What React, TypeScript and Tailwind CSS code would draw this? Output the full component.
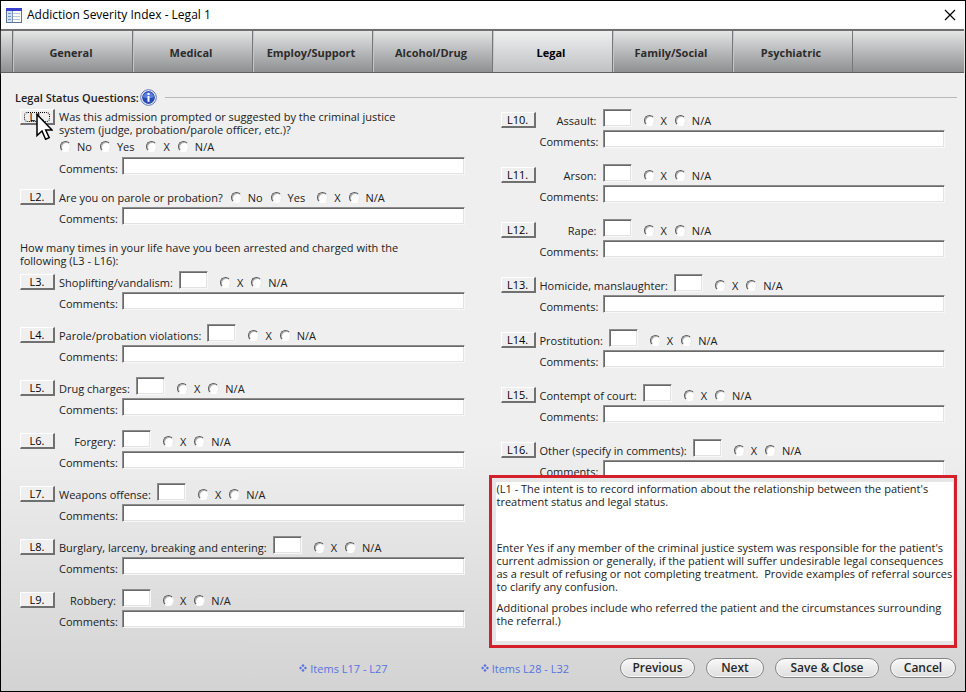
import type { ReactNode } from "react"
import { clsx } from "clsx"

/* ── Form data ───────────────────────────────────────────────────── */
const tabs = ["General", "Medical", "Employ/Support", "Alcohol/Drug", "Legal", "Family/Social", "Psychiatric"]
const activeTab = "Legal"

type Charge = { id: string; label: string }

const leftCharges: Charge[] = [
  { id: "L3", label: "Shoplifting/vandalism:" },
  { id: "L4", label: "Parole/probation violations:" },
  { id: "L5", label: "Drug charges:" },
  { id: "L6", label: "Forgery:" },
  { id: "L7", label: "Weapons offense:" },
  { id: "L8", label: "Burglary, larceny, breaking and entering:" },
  { id: "L9", label: "Robbery:" },
]

const rightCharges: Charge[] = [
  { id: "L10", label: "Assault:" },
  { id: "L11", label: "Arson:" },
  { id: "L12", label: "Rape:" },
  { id: "L13", label: "Homicide, manslaughter:" },
  { id: "L14", label: "Prostitution:" },
  { id: "L15", label: "Contempt of court:" },
  { id: "L16", label: "Other (specify in comments):" },
]

const sunken =
  "border border-t-[#8c8c8c] border-l-[#8c8c8c] border-r-[#f8f8f8] border-b-[#f8f8f8] bg-white shadow-[inset_1px_1px_0_#696969,inset_-1px_-1px_0_#e3e3e3] outline-none"

/* ── Small controls ──────────────────────────────────────────────── */
function ItemButton({ id, focused = false }: { id: string; focused?: boolean }) {
  return (
    <button
      type="button"
      className="h-4 w-[35px] shrink-0 border-t border-l border-r-2 border-b-2 border-t-white border-l-white border-r-[#707070] border-b-[#707070] bg-[#efefef] text-[11px] leading-[13px] text-black"
    >
      <span className={clsx("block", focused && "mx-[3px] h-[10px] rounded-sm border border-dotted border-black leading-[8px]")}>
        {id}.
      </span>
    </button>
  )
}

function Radios({ name, options }: { name: string; options: string[] }) {
  return (
    <div className="flex items-center">
      {options.map((option, i) => (
        <label key={option} className={clsx("flex items-center gap-[6px]", i > 0 && (option === "X" ? "ml-3" : "ml-2"))}>
          <input
            type="radio"
            name={name}
            className="size-[11px] appearance-none rounded-full border border-t-[#5a5a5a] border-r-[#e8e8e8] border-b-white border-l-[#5a5a5a] bg-white shadow-[inset_1px_1px_0_#b4b4b4]"
          />
          {option}
        </label>
      ))}
    </div>
  )
}

function Comments({ id }: { id: string }) {
  return (
    <div className="flex h-[18px] items-end pl-[39px]">
      <label htmlFor={`${id}-comments`} className="w-[57px] shrink-0">
        Comments:
      </label>
      <input id={`${id}-comments`} className={clsx(sunken, "ml-[6px] h-[18px] min-w-0 flex-1")} />
    </div>
  )
}

function ChargeRow({ id, label, className }: Charge & { className: string }) {
  return (
    <div className={className}>
      <div className="flex h-[19px] items-end">
        <ItemButton id={id} />
        <label htmlFor={`${id}-count`} className="ml-1 min-w-[57px] pb-px text-right whitespace-nowrap">
          {label}
        </label>
        <input id={`${id}-count`} className={clsx(sunken, "mr-3 ml-[6px] h-[18px] w-[29px] self-start")} />
        <div className="pb-px">
          <Radios name={id} options={["X", "N/A"]} />
        </div>
      </div>
      <div className="mt-[2px]">
        <Comments id={id} />
      </div>
    </div>
  )
}

function FooterButton({ children, className }: { children: ReactNode; className: string }) {
  return (
    <button
      type="button"
      className={clsx(
        "h-5 rounded-full border border-[#858585] bg-gradient-to-b from-[#f8f8f8] to-[#dedede] text-[12px] leading-4 font-semibold text-[#262626] shadow-[inset_0_0_0_1px_#fafafa]",
        className
      )}
    >
      {children}
    </button>
  )
}

/* ── Drawings ────────────────────────────────────────────────────── */
function FormIcon() {
  return (
    <svg width="16" height="15" viewBox="0 0 16 15" aria-hidden="true">
      <rect x="0.5" y="0.5" width="15" height="14" fill="#fff" stroke="#5f7592" />
      <rect x="0" y="0" width="16" height="3" fill="#3a3fd0" />
      <rect x="1" y="3" width="5" height="11" fill="#d3e1f5" />
      <path d="M2 5.5h3M2 8.5h3M2 11.5h3" stroke="#6f93c4" />
      <path d="M7 5.5h7M7 8.5h7M7 11.5h7" stroke="#b4c6dc" />
      <path d="M6.5 3v11" stroke="#7f93ad" />
    </svg>
  )
}

function InfoIcon() {
  return (
    <svg className="ml-px" width="17" height="17" viewBox="0 0 17 17" aria-hidden="true">
      <circle cx="8.5" cy="8.5" r="7.8" fill="#fff" stroke="#5b6eb0" />
      <circle cx="8.5" cy="8.5" r="6.4" fill="#2a4db5" />
      <path d="M3 8a5.6 5.6 0 0 1 11 0c-3 1.6-8 1.6-11 0z" fill="#5c7fdb" />
      <circle cx="8.5" cy="4.9" r="1.2" fill="#fff" />
      <path d="M7.5 7h2v5.800h-2z" fill="#fff" />
    </svg>
  )
}

function Cursor() {
  return (
    <svg className="absolute top-[7px] left-4" width="17" height="28" viewBox="0 0 17 28" aria-hidden="true">
      <path d="M1 1.5v21l5-4.5 3.6 8.3 3.6-1.6L9.7 17H16z" fill="#fff" stroke="#000" strokeWidth="1.5" />
    </svg>
  )
}

function ItemsLink({ children }: { children: ReactNode }) {
  return (
    <a href="#" className="flex items-center gap-[3px] text-[#5673e0]">
      <svg width="8" height="8" viewBox="0 0 10 10" fill="currentColor" aria-hidden="true">
        <path d="M5 0l2 2-2 2-2-2zM5 6l2 2-2 2-2-2zM2 3l2 2-2 2-2-2zM8 3l2 2-2 2-2-2z" />
      </svg>
      {children}
    </a>
  )
}

/* ── Page ────────────────────────────────────────────────────────── */
export default function App() {
  return (
    <div className="flex min-h-screen flex-col border border-black bg-[#efefef] font-['Open_Sans','Noto_Sans',sans-serif] text-[11px] leading-[13px] text-[#222]">
      {/* Title bar */}
      <header className="flex h-7 items-center bg-white pr-[9px] pl-[5px] text-black">
        <FormIcon />
        <h1 className="ml-[5px] flex-1 text-[12px] leading-4">Addiction Severity Index - Legal 1</h1>
        <button type="button" aria-label="Close">
          <svg width="12" height="12" viewBox="0 0 12 12" aria-hidden="true">
            <path d="M1 1l10 10M11 1L1 11" stroke="#000" strokeWidth="1.2" />
          </svg>
        </button>
      </header>

      {/* Tabs */}
      <nav className="mr-px flex h-11 border-t-2 border-b border-t-[#6f6f6f] border-b-[#5f6163] bg-gradient-to-b from-[#e4e5e5] to-[#8e9092] shadow-[0_1px_2px_#bbb]">
        <div className="w-3 border-r border-[#6f7173]" />
        {tabs.map((tab) => (
          <button
            key={tab}
            type="button"
            className={clsx(
              "w-[120px] border-r border-l border-r-[#75777a] border-l-[#c4c5c6] pt-[2px] pr-1 font-bold",
              tab === activeTab ? "bg-gradient-to-b from-[#eff0f0] to-[#bfc1c3] text-black" : "text-[#2c2c2c]"
            )}
          >
            {tab}
          </button>
        ))}
      </nav>

      <main className="flex flex-1 flex-col bg-gradient-to-b from-[#efefef] from-60% to-[#d3d3d3] pt-4">
        <div className="flex items-center pr-2 pl-[14px]">
          <h2 className="font-semibold">Legal Status Questions:</h2>
          <InfoIcon />
          <div className="ml-2 flex-1 border-t border-[#b8b8b8]" />
        </div>

        <div className="grid grid-cols-2 gap-9 pr-5 pl-[19px]">
          {/* Left column */}
          <div>
            <div className="relative flex pt-[3px]">
              <ItemButton id="L1" focused />
              <p className="ml-1 pt-px">
                Was this admission prompted or suggested by the criminal justice
                <br />
                system (judge, probation/parole officer, etc.)?
              </p>
              <Cursor />
            </div>
            <div className="mt-1 mb-1 pl-10">
              <Radios name="L1" options={["No", "Yes", "X", "N/A"]} />
            </div>
            <Comments id="L1" />

            <div className="mt-[14px] mb-[2px] flex items-center">
              <ItemButton id="L2" />
              <p className="mr-2 ml-1">Are you on parole or probation?</p>
              <Radios name="L2" options={["No", "Yes", "X", "N/A"]} />
            </div>
            <Comments id="L2" />

            <p className="mt-4 mb-1">
              How many times in your life have you been arrested and charged with the
              <br />
              following (L3 - L16):
            </p>
            {leftCharges.map((charge) => (
              <ChargeRow key={charge.id} {...charge} className="h-[53px]" />
            ))}
          </div>

          {/* Right column */}
          <div className="pt-[3px]">
            {rightCharges.map((charge) => (
              <ChargeRow key={charge.id} {...charge} className="h-[55px]" />
            ))}

            {/* Guidance for the focused item, laid over the end of L16 */}
            <section className="relative -mt-[19px] -mr-3 -ml-3 h-[173px] border-[3px] border-[#d3202a] bg-[#e6e6e6] py-1 pr-px pl-1">
              <div className="h-full bg-white pl-px whitespace-nowrap">
                <p>
                  (L1 - The intent is to record information about the relationship between the patient's
                  <br />
                  treatment status and legal status.
                </p>
                <p className="mt-[33px]">
                  Enter Yes if any member of the criminal justice system was responsible for the patient's
                  <br />
                  current admission or generally, if the patient will suffer undesirable legal consequences
                  <br />
                  as a result of refusing or not completing treatment.&nbsp; Provide examples of referral sources
                  <br />
                  to clarify any confusion.
                </p>
                <p className="mt-2">
                  Additional probes include who referred the patient and the circumstances surrounding
                  <br />
                  the referral.)
                </p>
              </div>
            </section>
          </div>
        </div>

        <footer className="mt-[10px] flex items-center justify-end pr-[9px] pb-3">
          <div className="mr-[51px] flex gap-[93px]">
            <ItemsLink>Items L17 - L27</ItemsLink>
            <ItemsLink>Items L28 - L32</ItemsLink>
          </div>
          <div className="flex gap-[11px]">
            <FooterButton className="w-[75px]">Previous</FooterButton>
            <FooterButton className="w-[58px]">Next</FooterButton>
            <FooterButton className="w-[104px]">Save &amp; Close</FooterButton>
            <FooterButton className="w-[66px]">Cancel</FooterButton>
          </div>
        </footer>
      </main>
    </div>
  )
}
